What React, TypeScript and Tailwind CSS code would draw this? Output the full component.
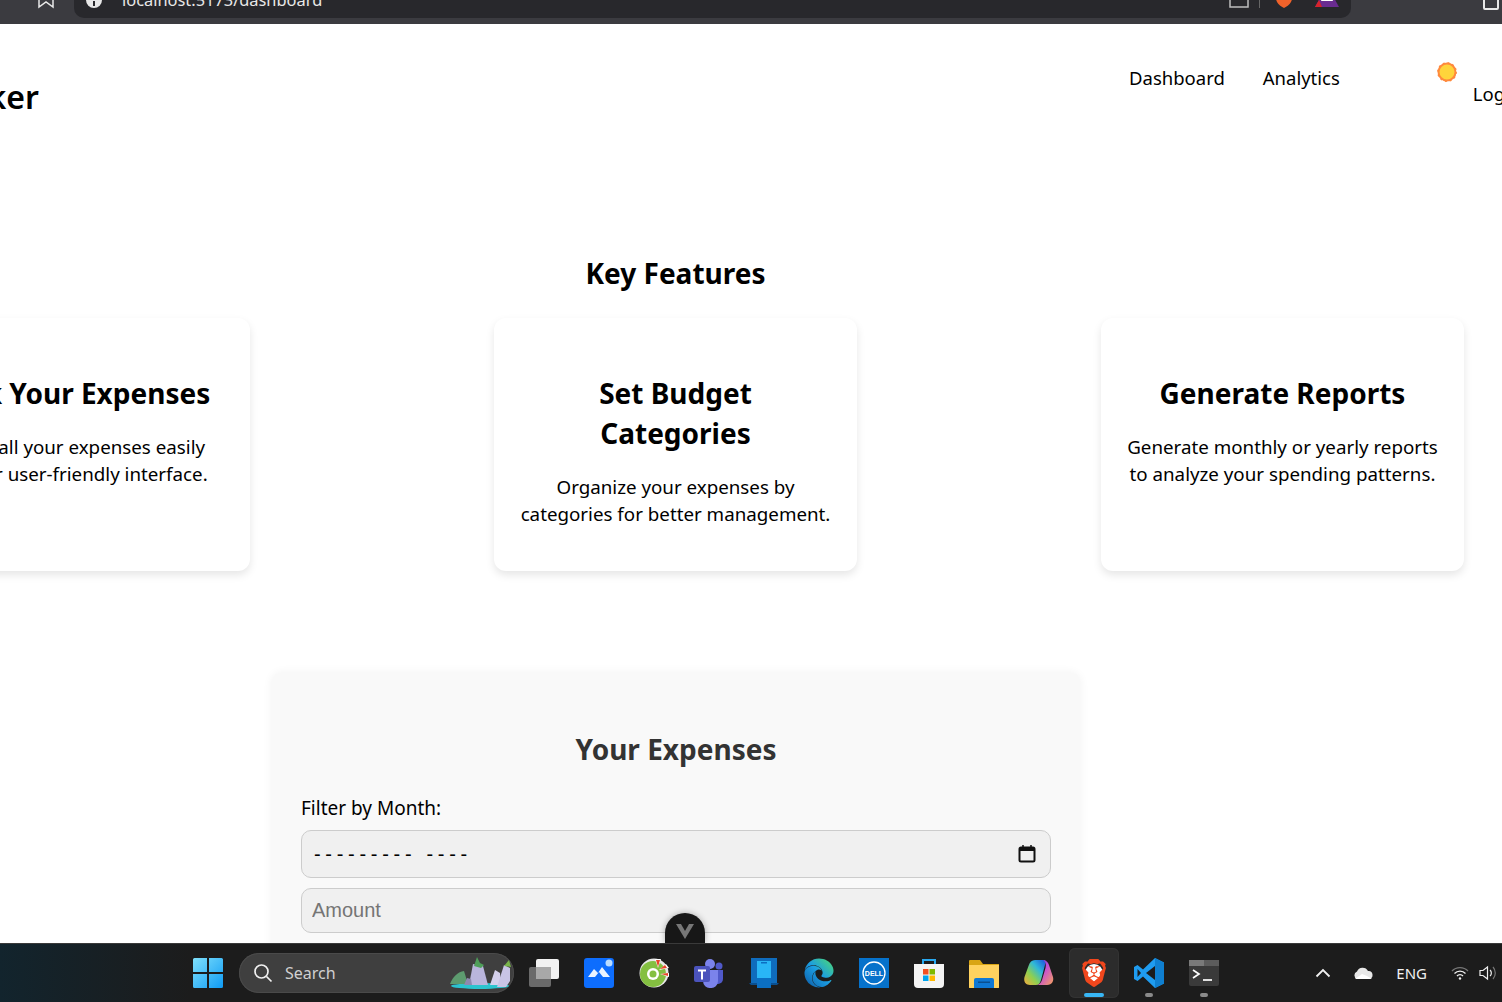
import { FaEdge } from 'react-icons/fa';
import { SiBrave } from 'react-icons/si';

const SANS = "font-['Noto_Sans',sans-serif]";

type Feature = {
  id: number;
  title: string;
  text: string;
};

const features: Feature[] = [
  { id: 1, title: 'Track Your Expenses', text: 'Record all your expenses easily\nwith our user-friendly interface.' },
  { id: 2, title: 'Set Budget Categories', text: 'Organize your expenses by categories for better management.' },
  { id: 3, title: 'Generate Reports', text: 'Generate monthly or yearly reports to analyze your spending patterns.' },
];

const BrowserBar = () => (
  <div className="flex h-[24px] shrink-0 items-end overflow-hidden bg-[#3b3b40]">
    <svg width="18" height="18" viewBox="0 0 18 18" className="mb-[15px] ml-[37px] shrink-0" fill="none" stroke="#e8e8e8" strokeWidth="1.5">
      <path d="M2 -6h14v22l-7-5-7 5z" />
    </svg>
    <div className="mb-[6px] ml-[19px] flex h-[36px] w-[1277px] shrink-0 items-center rounded-b-[10px] bg-[#28282c]">
      <span className="ml-[12px] flex h-[16px] w-[16px] items-center justify-center rounded-full bg-[#e8e8e8]">
        <span className="mt-[6px] h-[5px] w-[2px] bg-[#28282c]" />
      </span>
      <span className={`ml-[20px] text-[16.4px] text-[#e8e8e8] ${SANS}`}>localhost:5173/dashboard</span>
      <svg width="24" height="18" viewBox="0 0 24 18" className="mb-[-4px] ml-auto" fill="none" stroke="#bdbdbd" strokeWidth="1.5">
        <path d="M2 2v12h18V2" />
      </svg>
      <span className="ml-[7px] h-[16px] w-px bg-[#666]" />
      <svg width="20" height="20" viewBox="0 0 20 20" className="mb-[1px] ml-[14px]">
        <path d="M2 0h16v8c0 5-4 8-8 10-4-2-8-5-8-10z" fill="#f0622a" />
        <path d="M8 5h4v2h-4zM9 3h2v6H9z" fill="#fff" />
      </svg>
      <svg width="24" height="16" viewBox="0 0 24 16" className="mb-[-2px] ml-[21px] mr-[12px]">
        <path d="M12 -8L24 14H0z" fill="#6a2c91" />
        <path d="M12 -8l6 16H6z" fill="#fff" />
        <path d="M0 14l4-7 3 7z" fill="#d8232a" />
      </svg>
    </div>
    <span className="mb-[14px] ml-[132px] h-[20px] w-[16px] rounded-[2px] border-2 border-[#e8e8e8]" />
  </div>
);

const Header = () => (
  <header className={`ml-[-215px] flex h-[230px] w-[1800px] items-start text-[18.5px] text-black ${SANS}`}>
    <span className="mt-[49px] w-[1344px] shrink-0 text-[32px] font-semibold leading-[48px]">Expense Tracker</span>
    <a className="mt-[40px] leading-[28px]">Dashboard</a>
    <a className="ml-[38px] mt-[40px] leading-[28px]">Analytics</a>
    <svg width="20" height="20" viewBox="0 0 20 20" className="ml-[97px] mt-[38px] shrink-0">
      <circle cx="10" cy="10" r="8.500" fill="#ffd43b" stroke="#ff8a3d" strokeWidth="2" />
      <circle cx="10" cy="10" r="9.300" fill="none" stroke="#ff8a3d" strokeWidth="1.200" strokeDasharray="2 2.900" />
    </svg>
    <a className="ml-[16px] mt-[56px] leading-[28px]">Login</a>
  </header>
);

const FeatureCard = ({ title, text }: Feature) => (
  <div className="flex h-[253px] w-[363px] shrink-0 flex-col items-center rounded-[12px] bg-white px-[20px] pt-[56px] text-center shadow-[0_4px_8px_rgba(0,0,0,0.1)]">
    <h3 className="px-[8px] text-[28px] font-bold leading-[39.5px] text-black">{title}</h3>
    <p className="mt-[19.6px] whitespace-pre-line text-[18.75px] leading-[27px] text-black">{text}</p>
  </div>
);

const ExpenseForm = () => (
  <section className="ml-[271px] mt-[101px] w-[810px] rounded-t-[12px] bg-[#f9f9f9] px-[30px] pb-[80px] pt-[57px] shadow-[0_0_10px_rgba(0,0,0,0.05)]">
    <h2 className="text-center text-[28px] font-bold leading-[40px] text-[#333]">Your Expenses</h2>
    <label className="mt-[26px] block text-[19px] leading-[27px] text-black">Filter by Month:</label>
    <div className="relative mt-[8px]">
      <input
        readOnly
        value="--------- ----"
        className="block h-[48px] w-full rounded-[10px] border border-[#ccc] bg-[#f0f0f0] pl-[12px] font-['Liberation_Sans',sans-serif] text-[20px] tracking-[4.7px] text-black outline-none"
      />
      <svg width="18" height="18" viewBox="0 0 18 18" className="absolute right-[15px] top-[15px]" fill="none">
        <rect x="1.5" y="2.5" width="15" height="14" rx="1.5" stroke="#111" strokeWidth="2" />
        <path d="M1.5 3h15v3h-15z" fill="#111" />
        <path d="M5 0v3M13 0v3" stroke="#111" strokeWidth="1.5" />
      </svg>
    </div>
    <input
      placeholder="Amount"
      className="mt-[10px] block h-[45px] w-full rounded-[10px] border border-[#ccc] bg-[#f0f0f0] pl-[10px] font-['Liberation_Sans',sans-serif] text-[20px] text-black outline-none placeholder:text-[#757575]"
    />
  </section>
);

const WindowsLogo = () => (
  <svg width="30" height="30" viewBox="0 0 30 30">
    <defs>
      <linearGradient id="win" x1="0" y1="0" x2="1" y2="1">
        <stop offset="0" stopColor="#7fe0fb" />
        <stop offset="1" stopColor="#0f9bf5" />
      </linearGradient>
    </defs>
    <path d="M0 1.5A1.5 1.5 0 0 1 1.5 0H14v14H0zM16 0h12.5A1.5 1.5 0 0 1 30 1.5V14H16zM0 16h14v14H1.5A1.5 1.5 0 0 1 0 28.5zM16 16h14v12.5a1.5 1.5 0 0 1-1.5 1.5H16z" fill="url(#win)" />
  </svg>
);

const SearchArt = () => (
  <svg width="64" height="34" viewBox="0 0 64 34" className="absolute right-0 top-[3px]">
    <ellipse cx="30" cy="30" rx="29" ry="3" fill="#2bc4cf" />
    <path d="M0 28c3-8 8-12 14-13l4 13z" fill="#5d9b6f" />
    <path d="M19 29l4-21 10 2 5 19z" fill="#b9b5dc" />
    <path d="M24 10l3-9 3 6 4 2-3 3z" fill="#4f9f5a" />
    <path d="M40 29l5-15 5 3 1 12z" fill="#d4d0ec" />
    <path d="M47 31l7-22 6 3v13l-4 6z" fill="#c8c4e6" />
    <path d="M54 10l5-6 2 7z" fill="#79b54a" />
    <path d="M14 29l3-7 4 1 1 6z" fill="#8e8ab0" />
  </svg>
);

const TaskIcon = ({ children, active, dot }: { children: React.ReactNode; active?: boolean; dot?: boolean }) => (
  <div className={`relative ml-[3px] flex h-[50px] items-center justify-center rounded-[6px] ${active ? 'mr-[2px] w-[50px] bg-[#2c2c2c] shadow-[inset_0_0_0_1px_#333]' : 'mr-[3px] w-[49px]'}`}>
    {children}
    {active && <span className="absolute bottom-[1px] left-[15px] h-[4px] w-[20px] rounded-full bg-[#38b6f5]" />}
    {dot && <span className="absolute bottom-[1px] left-[21px] h-[4px] w-[8px] rounded-full bg-[#8a8a8a]" />}
  </div>
);

const Taskbar = () => (
  <footer className="relative z-10 flex h-[59px] shrink-0 items-center border-t border-[#3a3a3a] bg-[linear-gradient(90deg,#12242d_0px,#1c1c1c_190px)]">
    <div className="ml-[193px]">
      <WindowsLogo />
    </div>
    <div className="relative ml-[16px] flex h-[40px] w-[275px] items-center rounded-full bg-[#3f3f3f] shadow-[inset_0_0_0_1px_#4a4a4a]">
      <svg width="20" height="20" viewBox="0 0 20 20" className="ml-[14px]" fill="none" stroke="#f0f0f0" strokeWidth="1.7">
        <circle cx="8.5" cy="8.5" r="6.5" />
        <path d="M13.5 13.5l5 5" />
      </svg>
      <span className="ml-[12px] font-['Noto_Sans',sans-serif] text-[16px] text-[#d0d0d0]">Search</span>
      <SearchArt />
    </div>
    <div className="ml-[2px] flex items-center">
      <TaskIcon>
        <svg width="30" height="30" viewBox="0 0 30 30">
          <rect x="0" y="9" width="22" height="20" rx="2" fill="#6a6a6a" />
          <rect x="7" y="1" width="23" height="20" rx="2" fill="#f2f2f2" />
          <rect x="7" y="9" width="15" height="12" fill="#a8a8a8" />
        </svg>
      </TaskIcon>
      <TaskIcon>
        <svg width="30" height="30" viewBox="0 0 30 30">
          <rect width="30" height="30" rx="3" fill="#0d6dfd" />
          <path d="M4 19l6-8 4 4 4-6 8 10h-7l-4-5-4 5z" fill="#e9f3ff" />
          <circle cx="25" cy="5" r="3.5" fill="#b9dcff" />
        </svg>
      </TaskIcon>
      <TaskIcon>
        <svg width="30" height="30" viewBox="0 0 30 30" fill="none">
          <circle cx="15" cy="15" r="14.5" fill="#e8e8e8" />
          <circle cx="14" cy="16" r="13" fill="#84bf41" />
          <circle cx="14" cy="16" r="6" fill="#fff" />
          <circle cx="14" cy="16" r="3.5" fill="#84bf41" />
          <path d="M16 1l3 9 3-9zM27 6l-7 6 10-2zM30 15l-9 1 9 3z" fill="#fff" />
          <path d="M17 2l2 7 2-7zM26 7l-5 4 7-1zM29 15l-7 1 7 2z" fill="#e8452c" />
        </svg>
      </TaskIcon>
      <TaskIcon>
        <svg width="30" height="30" viewBox="0 0 30 30">
          <circle cx="16" cy="6" r="5" fill="#7b83eb" />
          <circle cx="25" cy="8" r="3.5" fill="#5059c9" />
          <path d="M20 12h9v9a5 5 0 0 1-5 5h-4z" fill="#5059c9" />
          <path d="M9 12h15v11a7 7 0 0 1-7.500 7A7 7 0 0 1 9 23z" fill="#7b83eb" />
          <rect x="0" y="8" width="16" height="16" rx="2" fill="#4b53bc" />
          <path d="M4 11.500h8v2H9v8H7v-8H4z" fill="#fff" />
        </svg>
      </TaskIcon>
      <TaskIcon>
        <svg width="30" height="30" viewBox="0 0 30 30">
          <path d="M2 0h26v26H2z" fill="#0f6cbd" />
          <path d="M0 25h30l-2 2H2z" fill="#0a4f8f" />
          <rect x="8" y="3" width="14" height="27" fill="#29b6f6" />
          <rect x="8" y="20" width="14" height="10" fill="#0b6fc2" />
          <rect x="12" y="4" width="6" height="1.500" fill="#0b6fc2" />
        </svg>
      </TaskIcon>
      <TaskIcon>
        <svg width="0" height="0" className="absolute">
          <defs>
            <linearGradient id="edge" x1="0" y1="1" x2="1" y2="0">
              <stop offset="0" stopColor="#0c59a4" />
              <stop offset="0.5" stopColor="#1b9de2" />
              <stop offset="1" stopColor="#4fdc6f" />
            </linearGradient>
          </defs>
        </svg>
        <FaEdge size={30} style={{ fill: 'url(#edge)' }} />
      </TaskIcon>
      <TaskIcon>
        <svg width="30" height="30" viewBox="0 0 30 30">
          <rect width="30" height="30" fill="#0672cb" />
          <circle cx="15" cy="15" r="11" fill="none" stroke="#fff" strokeWidth="1.3" />
          <text x="15" y="17.500" textAnchor="middle" fontSize="7" fontWeight="700" fill="#fff" fontFamily="Liberation Sans">DELL</text>
        </svg>
      </TaskIcon>
      <TaskIcon>
        <svg width="30" height="30" viewBox="0 0 30 30" fill="none">
          <path d="M9 6V2h12v4" stroke="#29a9f0" strokeWidth="2" />
          <path d="M0 6h30v20a4 4 0 0 1-4 4H4a4 4 0 0 1-4-4z" fill="#f4f4f4" />
          <rect x="9" y="11" width="5.500" height="5.500" fill="#f25022" />
          <rect x="15.500" y="11" width="5.500" height="5.500" fill="#7fba00" />
          <rect x="9" y="17.500" width="5.500" height="5.500" fill="#00a4ef" />
          <rect x="15.500" y="17.500" width="5.500" height="5.500" fill="#ffb900" />
        </svg>
      </TaskIcon>
      <TaskIcon>
        <svg width="30" height="30" viewBox="0 0 30 30">
          <path d="M0 3a1 1 0 0 1 1-1h10l3 4h16v24H0z" fill="#d9a514" />
          <path d="M0 7h30v22a1 1 0 0 1-1 1H1a1 1 0 0 1-1-1z" fill="#ffd25f" />
          <path d="M5 22a2 2 0 0 1 2-2h16a2 2 0 0 1 2 2v8H5z" fill="#0f78d4" />
          <rect x="9" y="23.500" width="12" height="1.500" fill="#0a4f8f" />
        </svg>
      </TaskIcon>
      <TaskIcon>
        <svg width="30" height="30" viewBox="0 0 30 30">
          <defs>
            <linearGradient id="copA" x1="0" y1="1" x2="1" y2="0">
              <stop offset="0" stopColor="#f6a93d" />
              <stop offset="0.35" stopColor="#8ed04f" />
              <stop offset="0.65" stopColor="#2fb8d8" />
              <stop offset="1" stopColor="#1b4fe0" />
            </linearGradient>
            <linearGradient id="copB" x1="0" y1="0" x2="1" y2="1">
              <stop offset="0" stopColor="#3a3fd0" />
              <stop offset="0.45" stopColor="#c44fd6" />
              <stop offset="1" stopColor="#f6a15b" />
            </linearGradient>
          </defs>
          <path d="M11 2h8c2 0 3 1 2.500 3L17 22c-1 3-2 5-5 5H6c-5 0-6.500-4-5.500-8l4-11c1-4 3.500-6 6.500-6z" fill="url(#copA)" />
          <path d="M19 2c3 0 5 2 6 5l4 12c1 4-1 8-6 8H12c3 0 5-2 6-5l3.500-12c.7-3 .5-6-2.500-8z" fill="url(#copB)" />
        </svg>
      </TaskIcon>
      <TaskIcon active>
        <span className="relative flex h-[30px] w-[28px] items-center justify-center">
          <span className="absolute left-[5px] top-[6px] h-[18px] w-[18px] rounded-full bg-white" />
          <SiBrave size={30} color="#f1471d" className="relative" />
        </span>
      </TaskIcon>
      <TaskIcon dot>
        <svg width="30" height="30" viewBox="0 0 30 30">
          <path d="M21 0l9 4.500v21L21 30 9 18.500 3.500 23 0 21V9l3.500-2L9 11.500z" fill="#1f9cf0" />
          <path d="M21 8L12 15l9 7z" fill="#1c1c1c" />
          <path d="M21 0l9 4.500v21L21 30z" fill="#0f7fd0" />
          <path d="M3.500 11l3.500 4-3.500 4z" fill="#1c1c1c" />
        </svg>
      </TaskIcon>
      <TaskIcon dot>
        <svg width="30" height="26" viewBox="0 0 30 26" fill="none">
          <rect width="30" height="26" rx="2" fill="#3a3a3a" />
          <rect width="30" height="6" fill="#7a7a7a" />
          <rect x="15" width="15" height="6" fill="#5c5c5c" />
          <path d="M4 10l6 4-6 4" stroke="#fff" strokeWidth="1.700" />
          <path d="M14 20h9" stroke="#fff" strokeWidth="1.700" />
        </svg>
      </TaskIcon>
    </div>
    <div className="ml-auto flex items-center">
      <svg width="16" height="10" viewBox="0 0 16 10" fill="none" stroke="#f0f0f0" strokeWidth="1.800">
        <path d="M1.500 8.500L8 2l6.500 6.500" />
      </svg>
      <svg width="20" height="12" viewBox="0 0 20 12" className="ml-[22px]">
        <path d="M4 12a4 4 0 0 1 0-7.500A6 6 0 0 1 15 4a4 4 0 0 1 1 8z" fill="#e8e8e8" />
        <path d="M2 12l7-5 5 2 5 3z" fill="#fff" />
      </svg>
      <span className="ml-[23px] font-['Noto_Sans',sans-serif] text-[15px] text-[#f0f0f0]">ENG</span>
      <svg width="18" height="14" viewBox="0 0 18 14" className="ml-[24px]" fill="none" stroke="#f0f0f0" strokeWidth="1.300">
        <path d="M1 5a11 11 0 0 1 16 0" stroke="#777" />
        <path d="M3.500 7.500a7.500 7.500 0 0 1 11 0" />
        <path d="M6 10a4 4 0 0 1 6 0" />
        <circle cx="9" cy="12.500" r="1.200" fill="#f0f0f0" stroke="none" />
      </svg>
      <svg width="18" height="16" viewBox="0 0 18 16" className="ml-[10px] mr-[5px]" fill="none" stroke="#f0f0f0" strokeWidth="1.200">
        <path d="M1 5.500h3L8.500 2v12L4 10.500H1z" />
        <path d="M11 5a4 4 0 0 1 0 6" />
        <path d="M14 2a9 9 0 0 1 0 12" stroke="#777" />
      </svg>
    </div>
  </footer>
);

export default function App() {
  return (
    <div className={`flex h-[1002px] w-[1502px] flex-col overflow-hidden bg-white ${SANS}`}>
      <BrowserBar />
      <main className="relative min-h-0 flex-1 overflow-hidden">
        <Header />
        <div className="w-[1351px]">
          <h2 className="text-center text-[28px] font-bold leading-[38px] text-black">Key Features</h2>
          <div className="mt-[26px] flex justify-center gap-[244px]">
            {features.map((feature) => (
              <FeatureCard key={feature.id} {...feature} />
            ))}
          </div>
          <ExpenseForm />
        </div>
        <span className="absolute left-[665px] top-[889px] flex h-[30px] w-[40px] items-start justify-center rounded-t-[20px] bg-[#171717] pt-[11px] shadow-[0_0_6px_rgba(0,0,0,0.3)]">
          <svg width="18" height="15" viewBox="0 0 18 15">
            <path d="M0 0h18L9 15z" fill="#777" />
            <path d="M5 0h8L9 7z" fill="#171717" />
          </svg>
        </span>
      </main>
      <Taskbar />
    </div>
  );
}
